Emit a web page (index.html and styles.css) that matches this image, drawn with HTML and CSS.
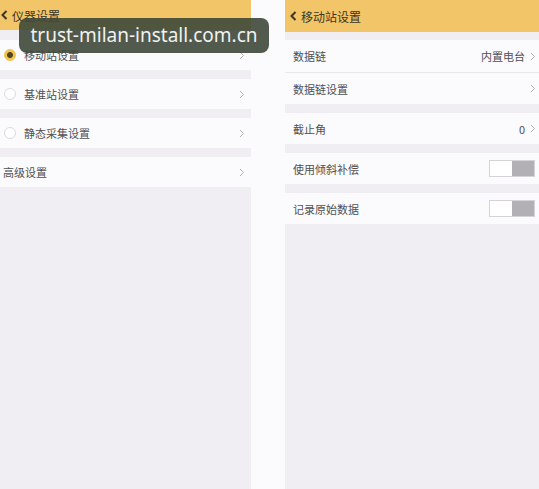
FILE: index.html
```html
<!DOCTYPE html>
<html lang="zh-CN">
<head>
    <meta charset="UTF-8">
    <meta name="viewport" content="width=device-width, initial-scale=1.0">
    <title>仪器设置</title>
    <link rel="stylesheet" href="styles.css">
</head>
<body>

    <div class="screens">

        <div class="screen screen-left">
            <div class="topbar">
                <svg class="back" width="7" height="10" viewBox="0 0 7 10"><polyline points="5.5,1 1.5,5 5.5,9" fill="none" stroke="#3d3526" stroke-width="2"/></svg>
                <span>仪器设置</span>
            </div>
            <div class="list">
                <div class="row">
                    <span class="radio checked"></span>
                    <span class="label">移动站设置</span>
                    <svg class="chev" width="6" height="9" viewBox="0 0 6 9"><polyline points="1,1 4.5,4.5 1,8" fill="none" stroke="#b4b2b6" stroke-width="1"/></svg>
                </div>
                <div class="row">
                    <span class="radio"></span>
                    <span class="label">基准站设置</span>
                    <svg class="chev" width="6" height="9" viewBox="0 0 6 9"><polyline points="1,1 4.5,4.5 1,8" fill="none" stroke="#b4b2b6" stroke-width="1"/></svg>
                </div>
                <div class="row">
                    <span class="radio"></span>
                    <span class="label">静态采集设置</span>
                    <svg class="chev" width="6" height="9" viewBox="0 0 6 9"><polyline points="1,1 4.5,4.5 1,8" fill="none" stroke="#b4b2b6" stroke-width="1"/></svg>
                </div>
                <div class="row">
                    <span class="label plain">高级设置</span>
                    <svg class="chev" width="6" height="9" viewBox="0 0 6 9"><polyline points="1,1 4.5,4.5 1,8" fill="none" stroke="#b4b2b6" stroke-width="1"/></svg>
                </div>
            </div>
        </div>

        <div class="screen screen-right">
            <div class="topbar tall">
                <svg class="back" width="7" height="10" viewBox="0 0 7 10"><polyline points="5.5,1 1.5,5 5.5,9" fill="none" stroke="#3d3526" stroke-width="2"/></svg>
                <span>移动站设置</span>
            </div>
            <div class="list wide">
                <div class="group">
                    <div class="row">
                        <span class="label">数据链</span>
                        <span class="value">内置电台</span>
                        <svg class="chev" width="6" height="9" viewBox="0 0 6 9"><polyline points="1,1 4.5,4.5 1,8" fill="none" stroke="#b4b2b6" stroke-width="1"/></svg>
                    </div>
                    <div class="row">
                        <span class="label">数据链设置</span>
                        <svg class="chev" width="6" height="9" viewBox="0 0 6 9"><polyline points="1,1 4.5,4.5 1,8" fill="none" stroke="#b4b2b6" stroke-width="1"/></svg>
                    </div>
                </div>
                <div class="row">
                    <span class="label">截止角</span>
                    <span class="value">0</span>
                    <svg class="chev" width="6" height="9" viewBox="0 0 6 9"><polyline points="1,1 4.5,4.5 1,8" fill="none" stroke="#b4b2b6" stroke-width="1"/></svg>
                </div>
                <div class="row">
                    <span class="label">使用倾斜补偿</span>
                    <span class="toggle"><i></i></span>
                </div>
                <div class="row">
                    <span class="label">记录原始数据</span>
                    <span class="toggle"><i></i></span>
                </div>
            </div>
        </div>

    </div>

    <div class="watermark">trust-milan-install.com.cn</div>

</body>
</html>
```

FILE: styles.css
```css
body {
    margin: 0;
    background: #fbfafc;
    font-family: "Noto Sans CJK SC", "Noto Sans", sans-serif;
    color: #505052;
}

.screens {
    display: flex;
    gap: 34px;
    height: 489px;
}

.screen {
    background: #f0eef3;
    display: flex;
    flex-direction: column;
}

.screen-left {
    width: 251px;
}

.screen-right {
    flex: 1;
}

/* yellow title bar */
.topbar {
    height: 30px;
    background: #f2c568;
    display: flex;
    align-items: center;
    gap: 4px;
    padding-left: 1px;
    font-size: 12px;
    color: #3d3526;
}

.topbar.tall {
    height: 32px;
    padding-left: 5px;
}

.list {
    display: flex;
    flex-direction: column;
    gap: 9px;
    padding-top: 10px;
}

.list.wide {
    padding-top: 8px;
}

.group {
    display: flex;
    flex-direction: column;
    gap: 1px;
    background: #e9e7ec;
}

.row {
    height: 30px;
    background: #fbfafc;
    display: flex;
    align-items: center;
    padding: 0 6px 0 3px;
    font-size: 11px;
}

.screen-right .row {
    height: 31px;
    padding: 0 3px 0 8px;
}

.screen-right .group .row:first-child {
    height: 32px;
}

.label {
    flex: 1;
    margin-left: 8px;
}

.label.plain,
.screen-right .label {
    margin-left: 0;
}

.value {
    margin-right: 5px;
}

.radio {
    width: 10px;
    height: 10px;
    border-radius: 50%;
    border: 1px solid #dcdadf;
    background: #ffffff;
    margin-left: 1px;
}

.radio.checked {
    border-color: #f0c44e;
    background: radial-gradient(circle, #4f4520 0 2.5px, #f0c44e 3.5px);
}

.toggle {
    width: 44px;
    height: 15px;
    border: 1px solid #d4d2d6;
    background: #ffffff;
    display: flex;
    justify-content: flex-end;
    margin-right: 1px;
}

.toggle i {
    width: 22px;
    background: #b3b0b5;
}

.watermark {
    position: absolute;
    top: 18px;
    left: 19px;
    width: 250px;
    height: 35px;
    border-radius: 8px;
    background: rgba(62, 72, 58, 0.9);
    color: #f2f2ee;
    font-family: "Noto Sans", sans-serif;
    font-size: 19px;
    line-height: 35px;
    text-align: center;
}
```
